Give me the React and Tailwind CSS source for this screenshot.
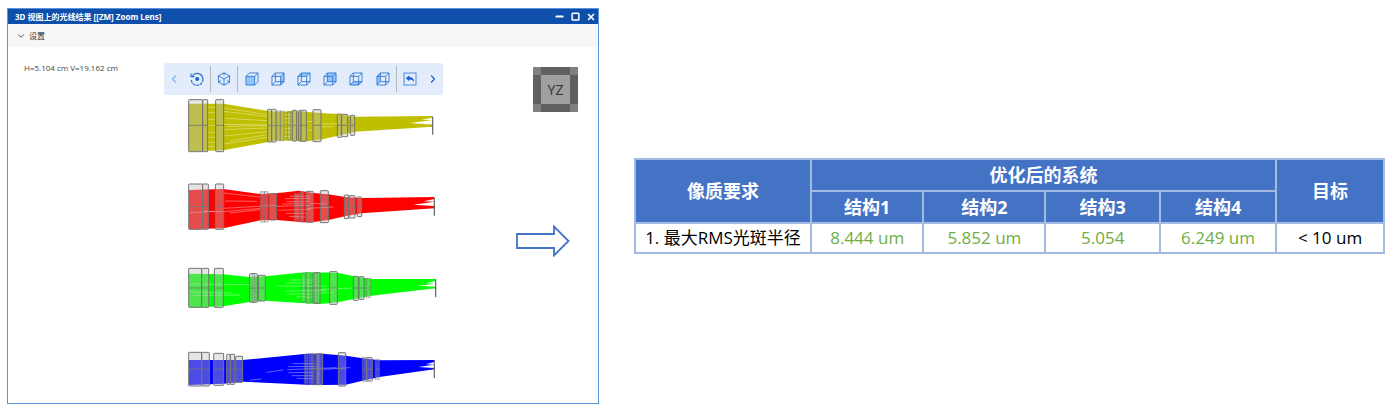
import React from "react";
import { ChevronDown, ChevronLeft, ChevronRight, Minus, Square, X } from "lucide-react";

// Lens outlines are [x1, x2, y1, y2]; beams are closed polygons around the axis
const systems = [
  {
    name: "结构1",
    color: "#bfbf00",
    axis: 100,
    beam: "27,35 130,35 265,57 300,60 340,56 420,63 475,66 524,74 758,72 758,77 722,83 758,84 690,93 758,98 758,104 524,119 475,131 420,143 380,148 290,145 265,150 130,175 27,178",
    lenses: [[26, 68, 23, 179], [68, 83, 23, 179], [107, 131, 23, 179], [263, 275, 52, 150], [275, 288, 52, 150], [337, 350, 55, 147], [356, 363, 55, 148], [363, 379, 55, 148], [399, 423, 53, 149], [472, 484, 66, 136], [485, 503, 67, 134], [511, 524, 70, 130]],
    thin: [[290, 301, 57, 146], [301, 312, 57, 146], [322, 332, 60, 144]],
    rays: [[132, 48, 262, 68], [132, 58, 262, 74], [135, 79, 262, 86], [132, 97, 310, 99], [142, 103, 262, 101], [132, 113, 262, 108], [132, 132, 262, 119], [150, 147, 262, 128], [132, 156, 262, 136], [312, 68, 338, 70], [312, 80, 338, 79], [312, 91, 338, 91], [312, 110, 338, 109], [312, 121, 338, 121], [312, 134, 338, 134], [380, 89, 398, 88], [380, 114, 398, 115], [424, 96, 472, 95], [424, 105, 460, 104], [84, 46, 106, 46], [84, 62, 106, 62], [84, 82, 106, 82], [84, 100, 106, 100], [84, 121, 106, 121], [84, 136, 106, 136], [84, 151, 106, 151], [84, 164, 106, 164]],
    image: [758, 74, 128],
  },
  {
    name: "结构2",
    color: "#ff0000",
    axis: 92,
    beam: "27,42 130,39 240,54 290,52 356,44 400,51 445,55 495,63 545,66 763,63 763,69 730,76 763,77 700,86 763,90 763,97 545,112 495,121 445,132 400,138 370,139 290,132 240,133 130,157 27,160",
    lenses: [[26, 68, 24, 160], [68, 85, 24, 160], [106, 131, 24, 160], [268, 289, 53, 132], [378, 400, 46, 139], [421, 445, 44, 140], [493, 506, 57, 128], [507, 525, 59, 126], [532, 545, 63, 122]],
    thin: [[241, 253, 47, 138], [253, 264, 47, 138], [343, 359, 53, 134], [361, 371, 47, 138]],
    rays: [[130, 51, 240, 63], [135, 75, 230, 76], [130, 97, 290, 88], [130, 107, 240, 97], [150, 111, 240, 101], [70, 106, 130, 107], [30, 110, 105, 106], [290, 91, 390, 88], [296, 103, 390, 100], [315, 68, 390, 67], [320, 77, 390, 76], [308, 84, 376, 83], [318, 112, 376, 112], [328, 121, 376, 123], [330, 61, 390, 60], [382, 97, 460, 93], [390, 82, 440, 84]],
    image: [763, 66, 119],
  },
  {
    name: "结构3",
    color: "#00ff00",
    axis: 84,
    beam: "27,41 130,43 208,51 256,49 375,37 472,38 522,49 574,57 766,57 766,63 738,70 766,71 715,77 766,80 766,85 574,107 522,117 472,127 420,132 375,130 256,122 208,126 130,139 27,143",
    lenses: [[26, 65, 25, 142], [65, 86, 25, 142], [103, 130, 25, 142], [209, 232, 41, 127], [235, 256, 46, 123], [399, 420, 38, 130], [449, 472, 35, 133], [520, 535, 49, 121], [537, 552, 50, 118]],
    thin: [[218, 224, 41, 127], [364, 376, 41, 126], [379, 391, 38, 130], [404, 411, 38, 130], [559, 572, 55, 112]],
    rays: [[30, 72, 208, 74], [30, 96, 155, 99], [40, 106, 180, 105], [290, 78, 440, 78], [315, 93, 440, 91], [320, 69, 400, 68], [330, 60, 400, 60], [320, 102, 400, 102], [348, 111, 400, 111], [410, 89, 515, 84], [415, 99, 460, 98]],
    image: [767, 58, 112],
  },
  {
    name: "结构4",
    color: "#0000ff",
    axis: 75,
    beam: "27,48 188,48 380,29 428,29 497,35 548,43 598,49 763,48 763,54 738,61 763,62 715,69 763,72 763,76 598,99 548,110 497,122 428,123 380,122 188,113 130,119 27,123",
    lenses: [[26, 65, 25, 126], [65, 88, 25, 126], [101, 131, 28, 124], [140, 151, 31, 121], [151, 164, 31, 121], [167, 188, 37, 115], [408, 428, 29, 122], [475, 497, 26, 126], [559, 577, 41, 111]],
    thin: [[373, 384, 32, 118], [387, 396, 29, 122], [396, 404, 29, 122], [411, 418, 29, 122], [547, 560, 40, 112], [586, 598, 46, 106]],
    rays: [[322, 77, 470, 71], [325, 68, 410, 67], [338, 59, 400, 59], [325, 86, 400, 85], [335, 95, 400, 95], [350, 103, 400, 104], [430, 76, 510, 71], [260, 85, 310, 78], [208, 109, 245, 105]],
    image: [763, 49, 102],
  },
];

function LensPlot({ system }) {
  const { name, color, axis, beam, lenses, thin, rays, image } = system;
  return (
    <svg role="img" aria-label={name} viewBox="0 21 780 144" className="block w-[260px] h-12 overflow-visible">
      <polygon points={beam} fill={color} />
      {rays.map(([x1, y1, x2, y2], i) => (
        <line key={i} x1={x1} y1={y1} x2={x2} y2={y2} stroke="#fff" strokeWidth="1.6" strokeOpacity="0.7" />
      ))}
      {lenses.map(([x1, x2, y1, y2], i) => (
        <g key={i}>
          <rect x={x1} y={y1} width={x2 - x1} height={y2 - y1} rx="2" fill="#bebebe" fillOpacity="0.4" stroke="#737373" strokeWidth="3" />
          <line x1={x1} x2={x2} y1={axis} y2={axis} stroke="#737373" strokeWidth="2.5" />
        </g>
      ))}
      {thin.map(([x1, x2, y1, y2], i) => (
        <g key={i}>
          <rect x={x1} y={y1} width={x2 - x1} height={y2 - y1} fill="#bebebe" fillOpacity="0.35" stroke="#737373" strokeWidth="2" strokeDasharray="7 2" />
          <line x1={x1} x2={x2} y1={axis} y2={axis} stroke="#737373" strokeWidth="2" />
        </g>
      ))}
      <line x1={image[0]} x2={image[0]} y1={image[1]} y2={image[2]} stroke="#606060" strokeWidth="3.5" />
      <line x1={image[0] - 6} x2={image[0] + 2} y1={axis} y2={axis} stroke="#606060" strokeWidth="2" />
    </svg>
  );
}

const faces = [
  { label: "Front view", points: "1,4.5 10,4.5 10,13.5 1,13.5" },
  { label: "Right view", points: "10,4.5 13.5,1 13.5,10 10,13.5" },
  { label: "Top view", points: "1,4.5 4.5,1 13.5,1 10,4.5" },
  { label: "Back view", points: "4.5,1 13.5,1 13.5,10 4.5,10" },
  { label: "Bottom view", points: "1,13.5 4.5,10 13.5,10 10,13.5" },
  { label: "Left view", points: "1,4.5 4.5,1 4.5,10 1,13.5" },
];

function FaceIcon({ points, solid }) {
  return (
    <svg viewBox="0 0 14.5 14.5" className="w-[14px] h-[14px]" fill="none" stroke="#2b74d3" strokeWidth="0.9" strokeLinejoin="round">
      <polygon points={points} fill="#90c5f5" stroke="none" />
      {!solid && <path d="M4.5 1v9h9M4.5 10 1 13.5" />}
      <path d="M1 4.5h9v9H1zM1 4.5 4.5 1h9v9L10 13.5M10 4.5 13.5 1" />
    </svg>
  );
}

function ToolButton({ label, className = "flex-1", children }) {
  return (
    <button type="button" aria-label={label} className={`${className} h-full flex items-center justify-center text-[#2b74d3]`}>
      {children}
    </button>
  );
}

function Separator() {
  return <div className="w-px h-[26px] bg-[#b3b7bb]" />;
}

function Toolbar() {
  return (
    <div className="w-full h-8 flex items-center rounded-[3px] bg-[#e2ecfb]">
      <ToolButton label="Previous" className="w-5">
        <ChevronLeft size={12} strokeWidth={2.5} color="#7fb6ee" />
      </ToolButton>
      <ToolButton label="Reset rotation">
        <svg viewBox="0 0 14 14" className="w-[14px] h-[14px]" fill="none" stroke="#2b74d3" strokeWidth="1.2">
          <path d="M2.2 4.2A5.8 5.8 0 0 1 12.9 7" />
          <path d="M12.9 7A5.8 5.8 0 0 1 1.3 8" strokeDasharray="3 0.7" />
          <path d="M1 1.5v3.2h3.4" />
          <circle cx="7.2" cy="7" r="2" fill="#1763cf" stroke="none" />
        </svg>
      </ToolButton>
      <Separator />
      <ToolButton label="Perspective view">
        <svg viewBox="0 0 14 14" className="w-[14px] h-[14px]" fill="none" stroke="#2b74d3" strokeWidth="0.9" strokeLinejoin="round">
          <path d="M7 .7 12.6 3.8v6.4L7 13.3 1.4 10.2V3.8z" />
          <path d="M1.4 3.8 7 7l5.6-3.2M7 7v6.3M7 .7v3M1.4 10.2l2.8-1.6M12.6 10.2 9.8 8.6" />
        </svg>
      </ToolButton>
      <Separator />
      {faces.map((face, i) => (
        <ToolButton key={face.label} label={face.label}>
          <FaceIcon points={face.points} solid={i === 0} />
        </ToolButton>
      ))}
      <Separator />
      <ToolButton label="Undo">
        <svg viewBox="0 0 14 14" className="w-[14px] h-[14px]" fill="none" stroke="#2b74d3">
          <rect x="1" y="1" width="12" height="12" strokeWidth="0.8" />
          <path d="M2.8 6.2 6.3 3.3v1.8c3 .1 4.6 1.7 5 5C9.9 8.2 8.5 7.500 6.300 7.500v1.800z" fill="#1763cf" stroke="none" />
        </svg>
      </ToolButton>
      <ToolButton label="Next" className="w-5">
        <ChevronRight size={12} strokeWidth={2.5} color="#2660b8" />
      </ToolButton>
    </div>
  );
}

function OrientationCube() {
  return (
    <button type="button" className="w-[45px] h-[45px] p-2 bg-[#808080] relative">
      <svg viewBox="0 0 45 45" className="absolute inset-0" aria-hidden="true">
        <path d="M8 0h29v8H8zM8 37h29v8H8zM0 8h8v29H0zM37 8h8v29h-8z" fill="#606060" />
        <path d="M8 8h29v29H8z" fill="#a0a0a0" />
      </svg>
      <span className="relative block text-[14px] leading-[29px] text-[#333]">YZ</span>
    </button>
  );
}

function ViewerWindow() {
  return (
    <section className="min-w-0 border border-[#5b93dd] bg-white">
      <header className="h-[15px] pl-[7px] pr-px flex items-center justify-between bg-[#0f4fac] text-white">
        <h1 className="text-[8px] leading-[15px] font-bold whitespace-nowrap font-['Noto_Sans','Noto_Sans_CJK_SC',sans-serif]">3D 视图上的光线结果 [[ZM] Zoom Lens]</h1>
        <div className="flex items-center gap-1">
          <button type="button" aria-label="Minimize" className="w-3 flex justify-center"><Minus size={11} strokeWidth={4} /></button>
          <button type="button" aria-label="Maximize" className="w-3 flex justify-center"><Square size={9} strokeWidth={4} /></button>
          <button type="button" aria-label="Close" className="w-3 flex justify-center"><X size={10} strokeWidth={4} /></button>
        </div>
      </header>

      <button type="button" className="w-full h-[23px] pl-2 flex items-center gap-[3px] bg-[#f7f7f7] text-[8px] text-[#333]">
        <ChevronDown size={10} />
        设置
      </button>

      <div className="flex pt-4">
        <p className="w-[156px] shrink-0 pl-4 text-[8px] leading-[10px] text-[#444] whitespace-nowrap">H=5.104 cm V=19.162 cm</p>

        <div className="w-[279px] shrink-0">
          <Toolbar />
          <div className="pl-4 pt-1 pb-1 flex flex-col gap-9">
            {systems.map((system) => (
              <LensPlot key={system.name} system={system} />
            ))}
          </div>
        </div>

        <div className="flex-1 pt-1 pr-5 flex flex-col items-end">
          <OrientationCube />
          <svg viewBox="0 0 54 32" className="w-[54px] h-8 mt-[113px] mr-2" aria-hidden="true">
            <path d="M1 9h37V1.5L52.5 16 38 30.5V23H1z" fill="#fff" stroke="#4472c4" strokeWidth="1.8" />
          </svg>
        </div>
      </div>
    </section>
  );
}

const results = ["8.444 um", "5.852 um", "5.054", "6.249 um"];

function ResultsTable() {
  return (
    <table className="w-full table-fixed border-collapse text-center text-[17px] leading-[28px] whitespace-nowrap">
      <colgroup>
        <col className="w-[23.5%]" />
        <col className="w-[15%]" />
        <col className="w-[16.3%]" />
        <col className="w-[15.3%]" />
        <col className="w-[15.5%]" />
        <col className="w-[14.4%]" />
      </colgroup>
      <thead className="bg-[#4472c4] text-white text-[18px] leading-[30px]">
        <tr>
          <th scope="col" rowSpan={2} className="border-2 border-[#a3bae3]">像质要求</th>
          <th scope="colgroup" colSpan={4} className="border-2 border-[#a3bae3]">优化后的系统</th>
          <th scope="col" rowSpan={2} className="border-2 border-[#a3bae3]">目标</th>
        </tr>
        <tr>
          {systems.map((system) => (
            <th key={system.name} scope="col" className="border-2 border-[#a3bae3]">{system.name}</th>
          ))}
        </tr>
      </thead>
      <tbody>
        <tr>
          <th scope="row" className="border-2 border-[#a3bae3] font-normal text-black">1. 最大RMS光斑半径</th>
          {results.map((value) => (
            <td key={value} className="border-2 border-[#a3bae3] text-[#70ad47]">{value}</td>
          ))}
          <td className="border-2 border-[#a3bae3] text-black">&lt; 10 um</td>
        </tr>
      </tbody>
    </table>
  );
}

export default function App() {
  return (
    <main className="grid grid-cols-[592fr_751fr] gap-[35px] items-center pt-2 pl-[7px] pr-[9px] bg-white font-['Open_Sans','Noto_Sans_CJK_SC',sans-serif]">
      <ViewerWindow />
      <ResultsTable />
    </main>
  );
}
